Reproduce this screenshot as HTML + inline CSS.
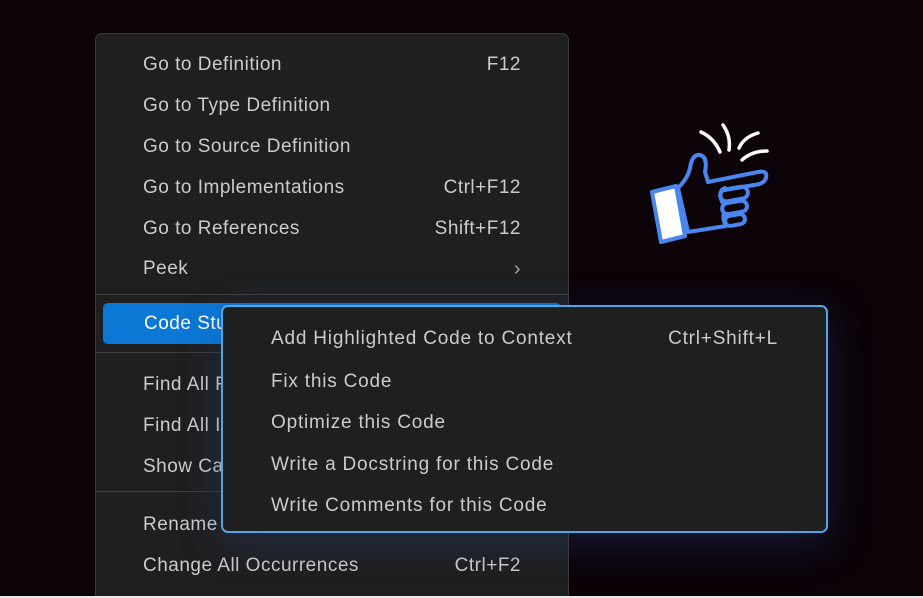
<!DOCTYPE html>
<html><head><meta charset="utf-8"><style>
*{margin:0;padding:0;box-sizing:border-box}
html,body{width:923px;height:598px;overflow:hidden;background:#0c0309;font-family:"Liberation Sans",sans-serif;position:relative}
.menu{position:absolute;left:95px;top:33px;width:474px;height:565px;background:#1f1f1f;border:1px solid #3a3a3a;border-bottom:none;border-radius:7px 7px 0 0;overflow:hidden}
.it{position:absolute;left:47px;right:47px;height:30px;line-height:30px;font-size:19px;letter-spacing:0.5px;color:#cbcbcb;white-space:nowrap;margin-top:2px}
.it .k{position:absolute;right:0;top:0}
.sep{position:absolute;left:0;right:0;height:1px;background:#3c3c3c}
.hl{position:absolute;left:7px;width:458px;top:269px;height:41px;background:#0a78d4;border-radius:5px;color:#fff;font-size:19px;letter-spacing:0.5px;line-height:42px;padding-left:41px}
.sub{position:absolute;left:221px;top:305px;width:607px;height:228px;background:#1f1f1f;border:2px solid #4ea6e8;border-radius:7px;box-shadow:0 10px 40px rgba(40,70,140,.35)}
.s{position:absolute;left:48px;right:48px;height:30px;line-height:30px;font-size:19px;letter-spacing:0.8px;color:#cbcbcb;white-space:nowrap;margin-top:2px}
.s .k{position:absolute;right:0;top:0}
.bot{position:absolute;left:0;top:596px;width:923px;height:2px;background:#e8e8e8}
</style></head><body>
<div class="menu">
<div class="it" style="top:14px">Go to Definition<span class="k">F12</span></div>
<div class="it" style="top:55px">Go to Type Definition</div>
<div class="it" style="top:96px">Go to Source Definition</div>
<div class="it" style="top:137px">Go to Implementations<span class="k">Ctrl+F12</span></div>
<div class="it" style="top:178px">Go to References<span class="k">Shift+F12</span></div>
<div class="it" style="top:218px">Peek<span class="k" style="font-size:20px;color:#aaa">&#x203A;</span></div>
<div class="sep" style="top:260px"></div>
<div class="hl">Code Studio</div>
<div class="sep" style="top:318px"></div>
<div class="it" style="top:334px">Find All References</div>
<div class="it" style="top:375px">Find All Implementations</div>
<div class="it" style="top:416px">Show Call Hierarchy</div>
<div class="sep" style="top:457px"></div>
<div class="it" style="top:474px">Rename</div>
<div class="it" style="top:515px">Change All Occurrences<span class="k">Ctrl+F2</span></div>
<div class="it" style="top:556px">Format Document<span class="k">Shift+Alt+F</span></div>
</div>
<div class="sub">
<div class="s" style="top:15px">Add Highlighted Code to Context<span class="k">Ctrl+Shift+L</span></div>
<div class="s" style="top:58px">Fix this Code</div>
<div class="s" style="top:99px">Optimize this Code</div>
<div class="s" style="top:141px">Write a Docstring for this Code</div>
<div class="s" style="top:182px">Write Comments for this Code</div>
</div>
<svg style="position:absolute;left:630px;top:110px" width="160" height="150" viewBox="0 0 160 150">
<g fill="none" stroke="#fff" stroke-width="3.5" stroke-linecap="round">
<path d="M71 22 Q84 28 90 42"/><path d="M93 15 Q101 26 99 40"/><path d="M109 38 Q114 27 128 23"/><path d="M112 50 Q122 41 137 41"/>
</g>
<g fill="none" stroke="#4a86f0" stroke-width="4" stroke-linejoin="round" stroke-linecap="round">
<path d="M48 78 Q58 68 60 58 Q62 44 70 45 Q78 47 75 62 L78 72 L128 62 Q138 60 136 68 Q134 74 124 75 L95 80"/>
<rect x="90" y="78" width="28" height="12" rx="6" transform="rotate(-10 104 84)"/>
<rect x="92" y="92" width="25" height="11" rx="5.5" transform="rotate(-10 104 97)"/>
<rect x="95" y="105" width="20" height="10" rx="5" transform="rotate(-10 105 110)"/>
<path d="M95 78 Q88 80 92 92 M94 104 Q92 108 96 116 L58 122"/>
<path d="M48 78 L58 122"/>
<path d="M22 82 L46 76 L55 126 L31 132 Z" fill="#fff"/>
</g>
</svg>
<div class="bot"></div>
</body></html>
